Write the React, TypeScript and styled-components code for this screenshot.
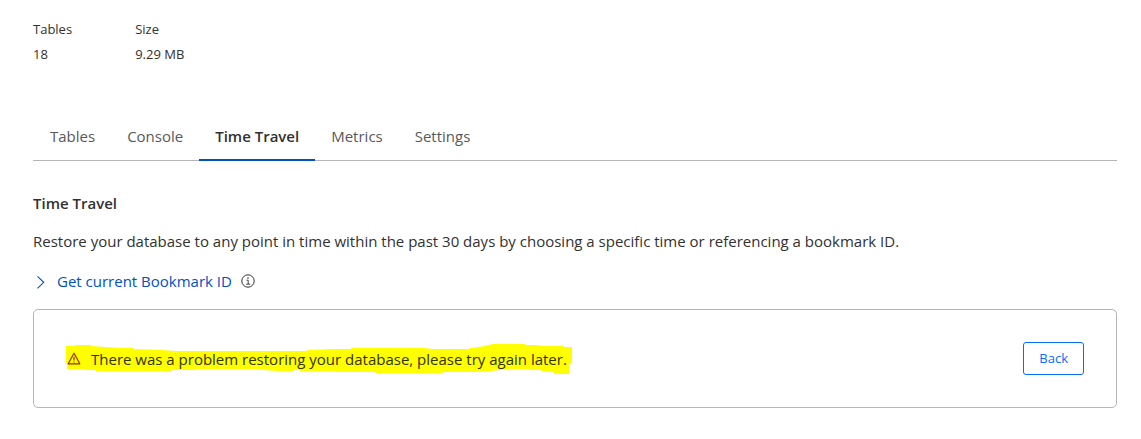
import React from "react";
import styled, { createGlobalStyle } from "styled-components";

const GlobalStyle = createGlobalStyle`
  *, *::before, *::after { box-sizing: border-box; }
  body {
    margin: 0;
    background: #fff;
    color: #313131;
    font-family: "Segoe UI", "Open Sans", "Noto Sans", sans-serif;
    font-size: 15px;
    line-height: 24px;
  }
  h2, p, dl, dd { margin: 0; }
  button { font-family: inherit; cursor: pointer; }
`;

const Page = styled.main`
  padding: 17px 24px 32px 33px;
`;

const Stats = styled.dl`
  display: flex;
  gap: 63px;
  font-size: 13px;
  line-height: 25px;
`;

const Stat = styled.div``;

const StatLabel = styled.dt``;

const StatValue = styled.dd``;

const Tabs = styled.nav`
  display: flex;
  margin-top: 45px;
  padding: 0 1px;
  border-bottom: 1px solid #b6b6b6;
`;

const Tab = styled.a<{ $active?: boolean }>`
  margin-bottom: -1px;
  padding: 12px 16px 11px;
  border-bottom: 2px solid ${(p) => (p.$active ? "#0051c3" : "transparent")};
  color: ${(p) => (p.$active ? "#313131" : "#595959")};
  font-weight: ${(p) => (p.$active ? 600 : 400)};
  line-height: 24px;
  text-decoration: none;
`;

const Heading = styled.h2`
  margin-top: 30px;
  font-size: 15px;
  font-weight: 600;
  line-height: 24px;
`;

const Description = styled.p`
  margin-top: 14px;
`;

const BookmarkRow = styled.div`
  display: flex;
  align-items: center;
  gap: 9px;
  margin-top: 16px;
`;

const Disclosure = styled.button`
  display: flex;
  align-items: center;
  gap: 9px;
  padding: 0;
  border: 0;
  background: none;
  color: #0051c3;
  font-size: 15px;
  line-height: 24px;
`;

const Icon = styled.svg`
  display: block;
  flex: none;
`;

const Card = styled.section`
  display: flex;
  align-items: center;
  justify-content: space-between;
  margin-top: 16px;
  padding: 32px;
  border: 1px solid #b6b6b6;
  border-radius: 5px;
`;

const Alert = styled.p`
  position: relative;
  display: flex;
  align-items: center;
  gap: 9px;
  color: #313100;
`;

const Marker = styled.svg`
  position: absolute;
  top: -4px;
  left: 0;
  z-index: -1;
`;

const BackButton = styled.button`
  padding: 0 15px;
  border: 1px solid #056cff;
  border-radius: 3px;
  background: #fff;
  color: #056cff;
  font-size: 13px;
  line-height: 31px;
`;

const tabs = ["Tables", "Console", "Time Travel", "Metrics", "Settings"];

export default function App() {
  return (
    <>
      <GlobalStyle />
      <Page>
        <Stats>
          <Stat>
            <StatLabel>Tables</StatLabel>
            <StatValue>18</StatValue>
          </Stat>
          <Stat>
            <StatLabel>Size</StatLabel>
            <StatValue>9.29 MB</StatValue>
          </Stat>
        </Stats>
        <Tabs>
          {tabs.map((name) => (
            <Tab
              key={name}
              href="#"
              $active={name === "Time Travel"}
              aria-current={name === "Time Travel" ? "page" : undefined}
            >
              {name}
            </Tab>
          ))}
        </Tabs>
        <Heading>Time Travel</Heading>
        <Description>
          Restore your database to any point in time within the past 30 days by choosing a specific
          time or referencing a bookmark ID.
        </Description>
        <BookmarkRow>
          <Disclosure type="button" aria-expanded={false}>
            <Icon width="15" height="16" viewBox="0 0 15 16" fill="none" stroke="#0051c3" strokeWidth="1.1">
              <path d="M4.5 3.3 10.7 9.3 4.5 15.3" />
            </Icon>
            Get current Bookmark ID
          </Disclosure>
          <Icon width="14" height="14" viewBox="0 0 14 14" fill="none" stroke="#313131">
            <circle cx="7" cy="7" r="6.2" />
            <path d="M5.5 6.2H7.2V10M5.2 10.2H9.2" strokeWidth=".9" />
            <circle cx="7" cy="4" r=".8" fill="#313131" stroke="none" />
          </Icon>
        </BookmarkRow>
        <Card>
          <Alert role="alert">
            <Marker width="507" height="32" viewBox="66 342 507 32" fill="#ffff00">
              <path d="M66 345H75V344H91V345L105 346L122 347H134V348L162 349L175 350H290H307V349L333 348H351V347H424L433 348H470V347L479 346L484 345L493 343H525V344H535L545 345H564V346H572V362H569V373H554V371H550V370H541V369H530V368H511L500 369L490 370L472 371H443V372H375V371H335V370H300V369H294V370H277L252 368H196V369H172V370H96V369H86V368H67V362H66Z" />
            </Marker>
            <Icon width="16" height="16" viewBox="0 0 16 16" fill="none" stroke="#a02c00" strokeWidth="1.2">
              <path d="M8 2.2 13.8 12.8H2.2Z" strokeLinejoin="round" />
              <path d="M8 5.8V9.4M8 10.4V11.6" />
            </Icon>
            There was a problem restoring your database, please try again later.
          </Alert>
          <BackButton type="button">Back</BackButton>
        </Card>
      </Page>
    </>
  );
}
